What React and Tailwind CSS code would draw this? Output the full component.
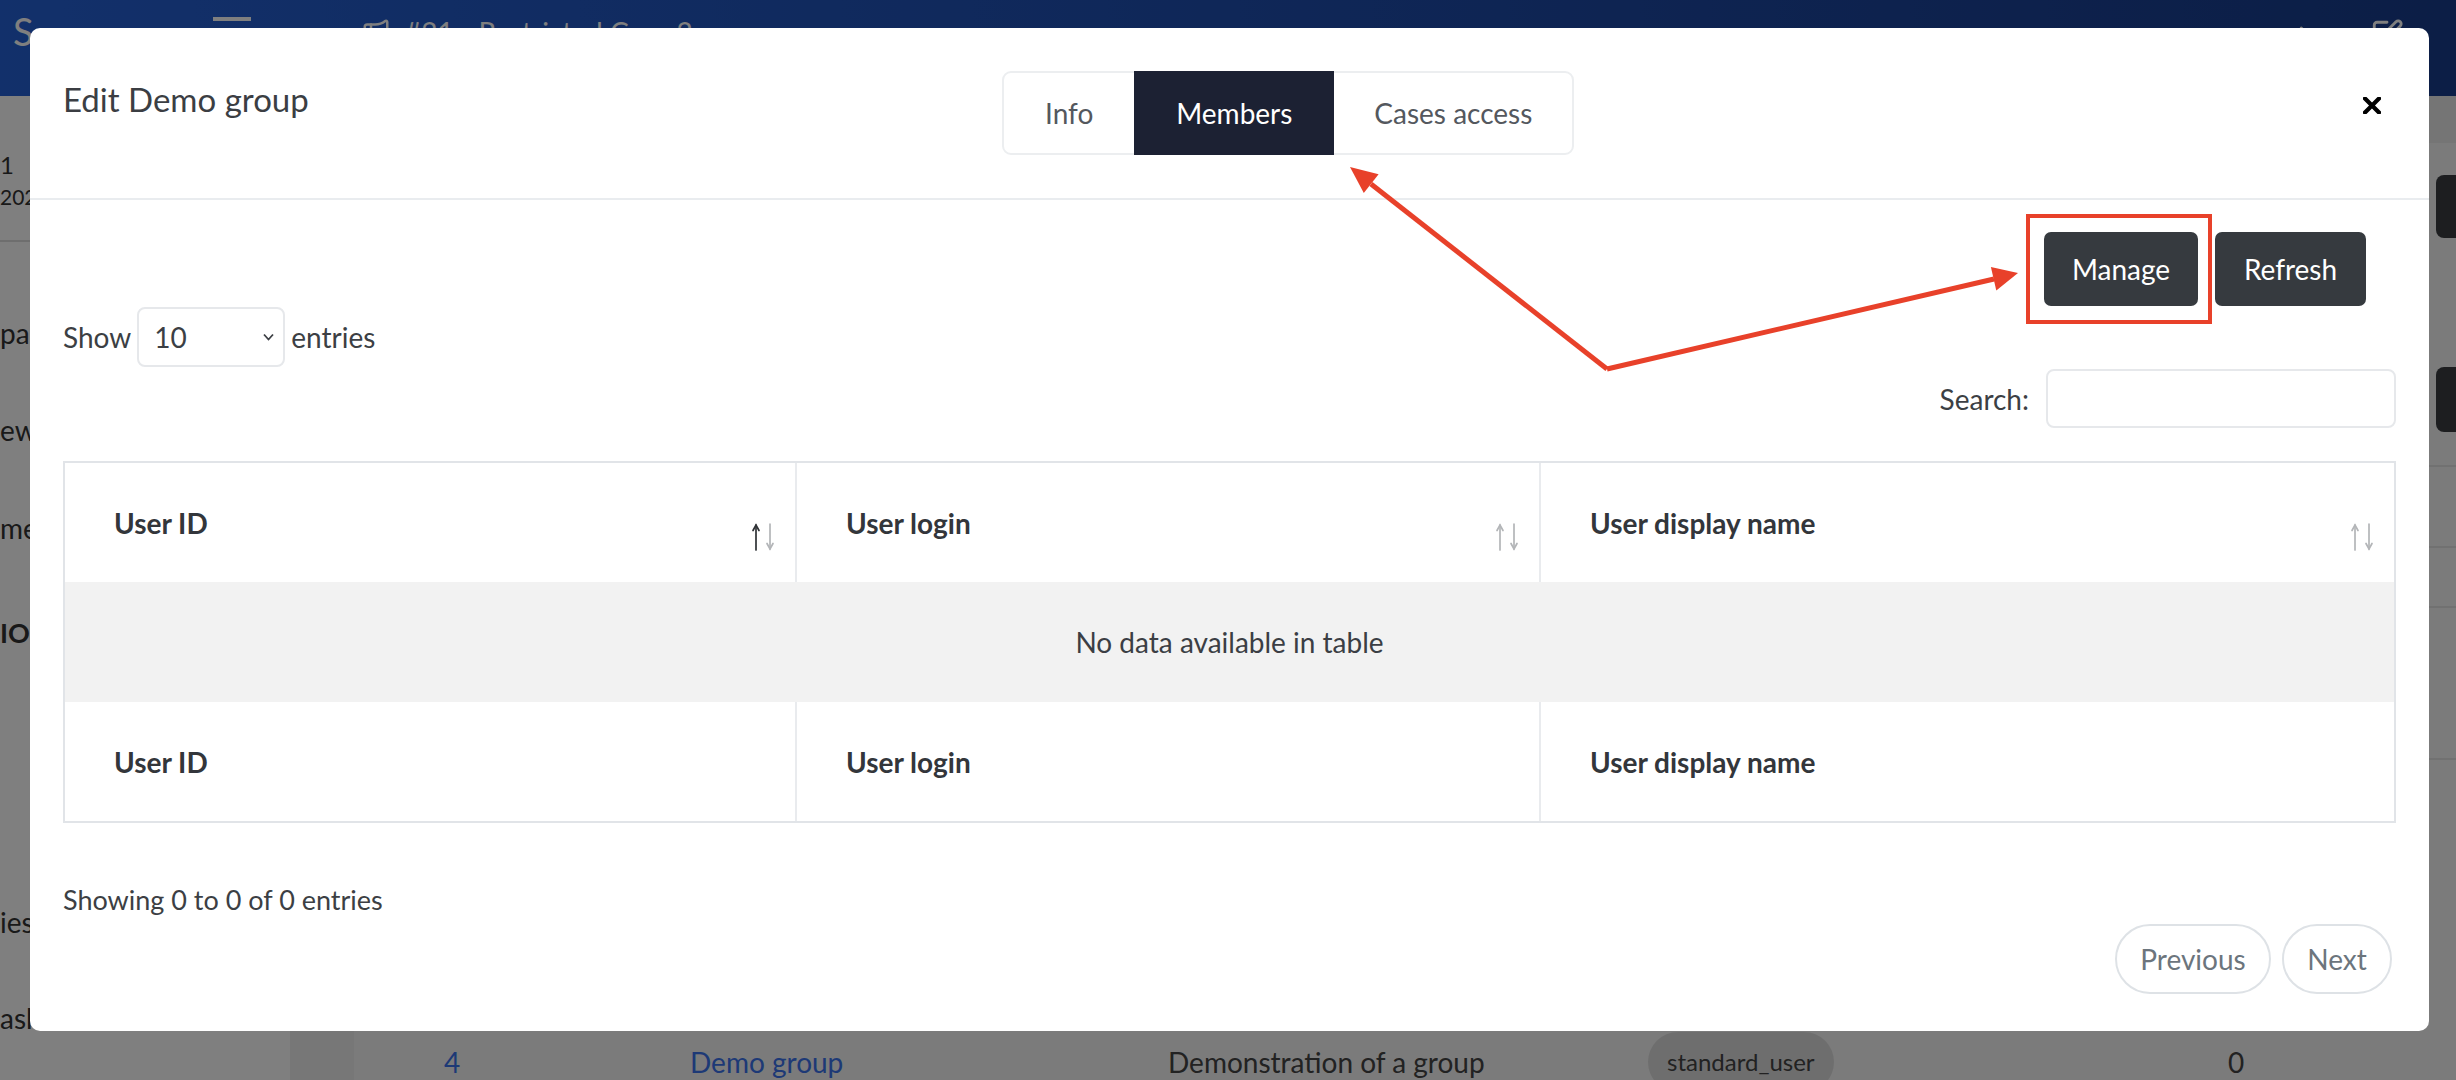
import React from 'react';
import { Megaphone, Forward, SquarePen } from 'lucide-react';

const SortIcon = ({ active }) => (
  <svg width="28" height="28" viewBox="0 0 28 28" fill="none" strokeWidth="1.7" strokeLinecap="round">
    <g stroke={active ? '#2f3236' : '#b3b5b8'}>
      <path d="M6 2v25" />
      <path d="M3 7.5 6 2l3 5.5" />
    </g>
    <g stroke="#b3b5b8">
      <path d="M20 1v25" />
      <path d="M17 20.5 20 26l3-5.5" />
    </g>
  </svg>
);

const HeaderCell = ({ label, sortable, active, last }) => (
  <th
    className={`relative h-[119px] pl-[49px] text-left align-middle font-bold text-[#33363b] ${
      last ? '' : 'border-r-2 border-[#e9ebee]'
    }`}
  >
    {label}
    {sortable && (
      <span className="absolute right-[17px] top-[60px]">
        <SortIcon active={active} />
      </span>
    )}
  </th>
);

const BackgroundPage = () => (
  <div className="flex h-full flex-col">
    {/* barre du haut */}
    <header className="flex h-[96px] shrink-0 items-start bg-linear-to-r from-[#2561d6] to-[#183c8c] text-white">
      <div className="w-[50px] pl-[13px] pt-[8px] text-[38px] leading-[46px]">S</div>
      <div className="ml-[163px] mt-[17px] flex flex-col gap-[8px]">
        <span className="h-[4px] w-[38px] bg-white" />
        <span className="h-[4px] w-[38px] bg-white" />
        <span className="h-[4px] w-[38px] bg-white" />
      </div>
      <div className="ml-[110px] flex items-center gap-[14px] pt-[15px] text-[28px] leading-[34px]">
        <Megaphone size={30} />
        <span>#21 - Restricted Case 2</span>
      </div>
      <div className="flex-1" />
      <div className="mr-[52px] flex gap-[56px] pt-[18px]">
        <Forward size={34} />
        <SquarePen size={34} />
      </div>
    </header>

    <div className="flex min-h-0 flex-1">
      {/* menu latéral */}
      <aside className="flex w-[290px] shrink-0 flex-col bg-white text-[#333333]">
        <div className="h-[54px] shrink-0" />
        <div className="flex h-[30px] shrink-0 items-center text-[24px]">1</div>
        <div className="mt-[3px] flex h-[28px] shrink-0 items-center text-[21px]">2021</div>
        <div className="h-[31px] shrink-0 border-b-2 border-[#dddddd]" />
        <div className="mt-[69px] h-[44px] shrink-0 text-[28px] leading-[44px]">par</div>
        <div className="mt-[53px] h-[44px] shrink-0 text-[28px] leading-[44px]">ew</div>
        <div className="mt-[54px] h-[44px] shrink-0 text-[28px] leading-[44px]">me</div>
        <div className="mt-[61px] h-[44px] shrink-0 text-[27px] font-bold leading-[44px]">IOI</div>
        <div className="mt-[245px] h-[44px] shrink-0 text-[28px] leading-[44px]">ies</div>
        <div className="mt-[52px] h-[44px] shrink-0 text-[28px] leading-[44px]">ask</div>
      </aside>

      <div className="w-[64px] shrink-0 bg-[#eeeeee]" />
      <div className="w-[39px] shrink-0 bg-[#f6f6f6]" />

      {/* contenu principal */}
      <main className="flex flex-1 flex-col overflow-hidden bg-[#f6f6f6]">
        <div className="h-[47px] shrink-0 bg-[#ebebeb]" />
        <div className="flex shrink-0 justify-end pt-[32px]">
          <div className="mr-[-100px] h-[63px] w-[120px] rounded-[8px] bg-[#3a3d41]" />
        </div>
        <div className="mt-[129px] flex shrink-0 justify-end">
          <div className="mr-[-100px] h-[65px] w-[120px] rounded-[8px] bg-[#3a3d41]" />
        </div>
        <div className="mt-[33px] h-[83px] shrink-0 border-y-2 border-[#e2e2e2]" />
        <div className="h-[60px] shrink-0 border-b-2 border-[#e2e2e2]" />
        <div className="h-[152px] shrink-0 border-b-2 border-[#e2e2e2]" />
        <div className="h-[270px] shrink-0" />
        <div className="flex h-[64px] shrink-0 items-center text-[28px] text-[#444444]">
          <div className="w-[297px] pl-[51px] text-[#3b73ec]">4</div>
          <div className="w-[478px] text-[#3b73ec]">Demo group</div>
          <div className="w-[480px]">Demonstration of a group</div>
          <div className="w-[580px]">
            <span className="inline-flex h-[60px] items-center rounded-full bg-[#dddddd] px-[19px] text-[24px]">
              standard_user
            </span>
          </div>
          <div>0</div>
        </div>
      </main>
    </div>
  </div>
);

const Annotations = () => (
  <svg className="pointer-events-none absolute inset-0" width="2456" height="1080" viewBox="0 0 2456 1080">
    <rect x="2028" y="216" width="182" height="106" fill="none" stroke="#e8412a" strokeWidth="4" />
    <path d="M1607 369 L1371 184" stroke="#e8412a" strokeWidth="5" fill="none" />
    <path d="M1350 167 L1378.6 174.3 L1363.8 193.1 Z" fill="#e8412a" />
    <path d="M1607 369 L1994 279" stroke="#e8412a" strokeWidth="5" fill="none" />
    <path d="M2018 273 L1990.9 267 L1996.3 290.4 Z" fill="#e8412a" />
  </svg>
);

const App = () => {
  return (
    <div className="relative h-[1080px] w-[2456px] overflow-hidden bg-[#f6f6f6] font-['Lato','Liberation_Sans',sans-serif]">
      <BackgroundPage />

      {/* voile du modal */}
      <div className="absolute inset-0 bg-black/50" />

      {/* modal */}
      <div className="absolute left-[30px] top-[28px] flex h-[1003px] w-[2399px] flex-col rounded-[10px] bg-white text-[28px] text-[#3c3f44]">
        {/* en-tête */}
        <div className="flex h-[172px] shrink-0 border-b-2 border-[#e9ecef]">
          <div className="w-[972px] pl-[33px] pt-[48px]">
            <h4 className="text-[33px] leading-[47px] text-[#3b3e43]">Edit Demo group</h4>
          </div>
          <div className="mt-[43px] flex h-[84px] rounded-[9px] border-2 border-[#eceef0]">
            <button className="flex items-center px-[41px] text-[#54585e]">Info</button>
            <button className="-my-[2px] flex items-center bg-[#1c2133] px-[42px] text-white">Members</button>
            <button className="flex items-center px-[40px] text-[#54585e]">Cases access</button>
          </div>
          <div className="flex-1" />
          <button className="mr-[48px] mt-[69px] h-[17px]">
            <svg width="18" height="17" viewBox="0 0 18 17">
              <path d="M2 1.5 L16 15.5 M16 1.5 L2 15.5" stroke="#000" strokeWidth="4.2" strokeLinecap="square" />
            </svg>
          </button>
        </div>

        {/* corps */}
        <div className="px-[33px]">
          <div className="flex justify-end gap-[17px] pr-[30px] pt-[32px]">
            <button className="h-[74px] w-[154px] rounded-[7px] bg-[#363a3f] text-white">Manage</button>
            <button className="h-[74px] w-[151px] rounded-[7px] bg-[#363a3f] text-white">Refresh</button>
          </div>

          <div className="mt-[1px] flex h-[60px] items-center">
            <span>Show</span>
            <div className="ml-[6px] mr-[6px] flex h-[60px] w-[148px] items-center justify-between rounded-[8px] border-2 border-[#e6e8eb] pl-[15px] pr-[9px]">
              <span>10</span>
              <svg width="11" height="8" viewBox="0 0 11 8" fill="none">
                <path d="M1 1.5 5.5 6.5 10 1.5" stroke="#3c3f44" strokeWidth="1.8" />
              </svg>
            </div>
            <span>entries</span>
          </div>

          <div className="mt-[2px] flex items-center justify-end gap-[17px]">
            <span>Search:</span>
            <div className="h-[59px] w-[350px] rounded-[8px] border-2 border-[#e6e8eb]" />
          </div>

          <div className="mt-[33px] border-2 border-[#e1e4e8]">
            <table className="w-full table-fixed border-separate border-spacing-0">
              <colgroup>
                <col className="w-[732px]" />
                <col className="w-[744px]" />
                <col />
              </colgroup>
              <thead>
                <tr>
                  <HeaderCell label="User ID" sortable active />
                  <HeaderCell label="User login" sortable />
                  <HeaderCell label="User display name" sortable last />
                </tr>
              </thead>
              <tbody>
                <tr>
                  <td colSpan={3} className="h-[120px] bg-[#f2f2f2] text-center align-middle text-[#3b3e44]">
                    No data available in table
                  </td>
                </tr>
              </tbody>
              <tfoot>
                <tr>
                  <HeaderCell label="User ID" />
                  <HeaderCell label="User login" />
                  <HeaderCell label="User display name" last />
                </tr>
              </tfoot>
            </table>
          </div>

          <div className="mt-[56px] text-[27px] leading-[42px]">Showing 0 to 0 of 0 entries</div>

          <div className="mt-[3px] flex justify-end gap-[11px] pr-[4px]">
            <button className="h-[70px] w-[156px] rounded-full border-2 border-[#dee2e6] text-[#6c757d]">Previous</button>
            <button className="h-[70px] w-[110px] rounded-full border-2 border-[#dee2e6] text-[#6c757d]">Next</button>
          </div>
        </div>
      </div>

      <Annotations />
    </div>
  );
};

export default App;
